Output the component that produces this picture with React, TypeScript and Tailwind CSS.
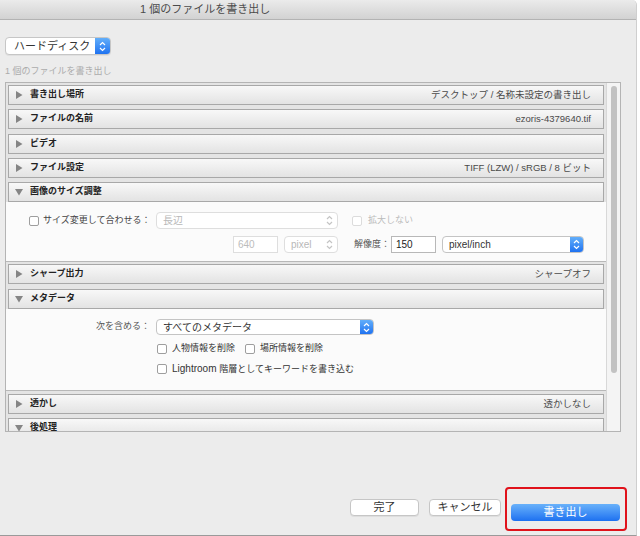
import React from 'react';

const font = { fontFamily: '"Liberation Sans", "Noto Sans CJK JP", sans-serif' };

const Tri = ({ open }: { open?: boolean }) => (
  <svg width="8" height="8" viewBox="0 0 8 8" className="shrink-0">
    {open ? <polygon points="0,1 8,1 4,7.5" fill="#858585" /> : <polygon points="1,0 7.5,4 1,8" fill="#858585" />}
  </svg>
);

const Stepper = ({ color = '#9a9a9a' }: { color?: string }) => (
  <svg width="7" height="11" viewBox="0 0 7 11">
    <path d="M1 4 L3.5 1.5 L6 4 M1 7 L3.5 9.5 L6 7" stroke={color} strokeWidth="1.2" fill="none" />
  </svg>
);

const Header = ({ title, value, open, mt = 'mt-[4px]' }: { title: string; value?: string; open?: boolean; mt?: string }) => (
  <div className={`${mt} mx-[2px] h-[20px] flex items-center border border-[#a8a8a8] bg-linear-to-b from-[#f8f8f8] to-[#e3e3e3] pl-[6px] pr-[12px]`}>
    <div className="w-[15px]"><Tri open={open} /></div>
    <span className="font-bold text-[9px] text-[#222]">{title}</span>
    {value && <span className="ml-auto text-[9.5px] text-[#4a4a4a] whitespace-nowrap">{value}</span>}
  </div>
);

const Check = ({ disabled }: { disabled?: boolean }) => (
  <span className={`block w-[10px] h-[10px] rounded-[2px] border bg-white shrink-0 ${disabled ? 'border-[#dcdcdc]' : 'border-[#9e9e9e]'}`} />
);

const Select = ({ text, w, disabled, blue, h = 'h-[17px]' }: { text: string; w: string; disabled?: boolean; blue?: boolean; h?: string }) => (
  <div className={`${w} ${h} flex items-center rounded-[4px] border bg-white ${disabled ? 'border-[#dedede]' : 'border-[#c4c4c4]'}`}>
    <span className={`pl-[6px] text-[10px] whitespace-nowrap ${disabled ? 'text-[#b8b8b8]' : 'text-[#333]'}`}>{text}</span>
    {blue ? (
      <div className="ml-auto h-full w-[13px] rounded-r-[3px] bg-linear-to-b from-[#62aefa] to-[#1f72f0] flex items-center justify-center">
        <Stepper color="#fff" />
      </div>
    ) : (
      <div className="ml-auto pr-[4px] flex items-center"><Stepper color={disabled ? '#c4c4c4' : '#8a8a8a'} /></div>
    )}
  </div>
);

export default function App() {
  return (
    <div className="w-[640px] h-[536px] bg-white" style={font}>
      <div className="w-[637px] h-[536px] flex flex-col bg-[#ececec] rounded-tr-[5px] border-r border-[#cfcfcf] border-b border-b-[#9a9a9a]">
        {/* title bar */}
        <div className="h-[20px] shrink-0 flex items-center pl-[140px] rounded-tr-[5px] bg-linear-to-b from-[#ebebeb] to-[#d2d2d2] border-b border-[#b3b3b3]">
          <span className="text-[11px] text-[#4b4b4b] whitespace-nowrap">1 個のファイルを書き出し</span>
        </div>

        <div className="pl-[5px] pt-[17px]">
          <div className="w-[106px] h-[18px] flex items-center rounded-[4px] border border-[#c6c6c6] bg-white shadow-[0_1px_0_rgba(0,0,0,0.05)]">
            <span className="pl-[8px] text-[11px] text-[#333]">ハードディスク</span>
            <div className="ml-auto h-full w-[15px] rounded-r-[3px] bg-linear-to-b from-[#62aefa] to-[#1f72f0] flex items-center justify-center">
              <Stepper color="#fff" />
            </div>
          </div>
          <div className="mt-[10px] h-[12px] text-[9px] leading-[12px] text-[#ababab]">1 個のファイルを書き出し</div>
        </div>

        {/* panel */}
        <div className="mt-[5px] ml-[5px] w-[616px] h-[350px] flex border border-[#b4b4b4] bg-[#e4e4e4] overflow-hidden">
          <div className="flex-1 pt-[2px]">
            <Header title="書き出し場所" value="デスクトップ / 名称未設定の書き出し" mt="mt-0" />
            <Header title="ファイルの名前" value="ezoris-4379640.tif" />
            <Header title="ビデオ" mt="mt-[5px]" />
            <Header title="ファイル設定" value="TIFF (LZW) / sRGB / 8 ビット" />
            <Header title="画像のサイズ調整" open />
            <div className="h-[60px] bg-[#fbfbfb] border-b border-[#b8b8b8] pt-[10px] text-[9px] whitespace-nowrap">
              <div className="h-[17px] flex items-center">
                <div className="w-[150px] flex items-center pl-[23px] gap-[4px]">
                  <Check />
                  <span className="text-[#444]">サイズ変更して合わせる：</span>
                </div>
                <Select text="長辺" w="w-[182px]" disabled />
                <div className="ml-[14px] flex items-center gap-[6px]">
                  <Check disabled />
                  <span className="text-[#bcbcbc]">拡大しない</span>
                </div>
              </div>
              <div className="mt-[7px] h-[17px] flex items-center">
                <div className="w-[227px]" />
                <div className="w-[45px] h-[17px] border border-[#dedede] bg-white flex items-center pl-[4px] text-[10px] text-[#bcbcbc]">640</div>
                <div className="ml-[6px]"><Select text="pixel" w="w-[54px]" disabled /></div>
                <span className="ml-[16px] w-[37px] text-[#555]">解像度：</span>
                <div className="w-[45px] h-[17px] border border-[#b8b8b8] bg-white flex items-center pl-[4px] text-[10px] text-[#222]">150</div>
                <div className="ml-[6px]"><Select text="pixel/inch" w="w-[142px]" blue /></div>
              </div>
            </div>
            <Header title="シャープ出力" value="シャープオフ" mt="mt-[2px]" />
            <Header title="メタデータ" open mt="mt-[5px]" />
            <div className="h-[82px] bg-[#fbfbfb] border-b border-[#b8b8b8] pt-[10px] text-[9px] whitespace-nowrap">
              <div className="h-[16px] flex items-center">
                <span className="w-[150px] pr-[6px] text-right text-[#555]">次を含める：</span>
                <Select text="すべてのメタデータ" w="w-[218px]" h="h-[16px]" blue />
              </div>
              <div className="mt-[7px] h-[14px] flex items-center pl-[151px] text-[#333]">
                <Check />
                <span className="ml-[5px]">人物情報を削除</span>
                <span className="ml-[10px]"><Check /></span>
                <span className="ml-[5px]">場所情報を削除</span>
              </div>
              <div className="mt-[6px] h-[14px] flex items-center pl-[151px] text-[#333]">
                <Check />
                <span className="ml-[5px] text-[10px]">Lightroom <span className="text-[9px]">階層としてキーワードを書き込む</span></span>
              </div>
            </div>
            <Header title="透かし" value="透かしなし" mt="mt-[3px]" />
            <Header title="後処理" open />
          </div>
          {/* scrollbar */}
          <div className="w-[14px] border-l border-[#d8d8d8] bg-[#f4f4f4] pt-[3px] flex justify-center">
            <div className="w-[6px] h-[287px] rounded-full bg-[#c2c2c2]" />
          </div>
        </div>

        {/* buttons */}
        <div className="mt-[55px] flex items-start justify-end pr-[9px]">
          <button className="mt-[12px] w-[69px] h-[17px] rounded-[4px] border border-[#c6c6c6] bg-white text-[11px] text-[#333] leading-none shadow-[0_1px_0_rgba(0,0,0,0.06)]">完了</button>
          <button className="mt-[12px] ml-[10px] w-[72px] h-[17px] rounded-[4px] border border-[#c6c6c6] bg-white text-[11px] text-[#333] leading-none shadow-[0_1px_0_rgba(0,0,0,0.06)]">キャンセル</button>
          <div className="ml-[4px] w-[122px] h-[44px] border-2 border-[#e0121b] rounded-[4px] pt-[10px] pl-[4px]">
            <button className="w-[109px] h-[17px] rounded-[4px] bg-linear-to-b from-[#69b1fa] to-[#1c70f0] text-[11px] text-white leading-none">書き出し</button>
          </div>
        </div>
      </div>
    </div>
  );
}
